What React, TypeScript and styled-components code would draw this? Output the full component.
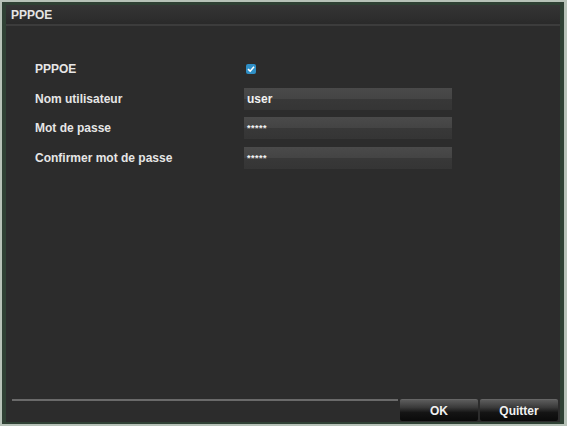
import React from 'react';
import styled, { createGlobalStyle } from 'styled-components';

const GlobalStyle = createGlobalStyle`
  html, body {
    margin: 0;
    padding: 0;
    background: #b7c2b8;
  }
  body {
    font-family: "Liberation Sans", Arial, sans-serif;
  }
`;

const Window = styled.div`
  box-sizing: border-box;
  width: 567px;
  height: 426px;
  padding: 2px 3px 2px 2px;
  background: #b7c2b8;
`;

const Frame = styled.div`
  box-sizing: border-box;
  height: 100%;
  border: 4px solid #2f4134;
  border-top-width: 3px;
  border-bottom-width: 2px;
  background: #2c2c2c;
  display: flex;
  flex-direction: column;
`;

const TitleBar = styled.div`
  height: 19px;
  padding-left: 5px;
  display: flex;
  align-items: center;
  color: #e4e4e4;
  font-size: 12px;
  font-weight: bold;
  background: linear-gradient(#353535, #2a2a2a);
  border-bottom: 2px solid #3c3c3c;
`;

const Body = styled.div`
  flex: 1;
  padding: 33px 0 0 29px;
`;

const Form = styled.div`
  display: grid;
  grid-template-columns: 209px 208px;
  grid-auto-rows: 20px;
  row-gap: 9.5px;
  align-items: center;
`;

const Label = styled.span`
  color: #e6e6e6;
  font-size: 12px;
  font-weight: bold;
`;

const Check = styled.span`
  width: 10px;
  height: 10px;
  margin-left: 2px;
  border-radius: 2px;
  background: #2f8fc6;
  display: flex;
  align-items: center;
  justify-content: center;
`;

const Field = styled.div<{ $secret?: boolean }>`
  box-sizing: border-box;
  height: 22px;
  padding-left: 3px;
  display: flex;
  align-items: center;
  color: #f2f2f2;
  font-size: ${(p) => (p.$secret ? '9px' : '12px')};
  font-weight: bold;
  letter-spacing: ${(p) => (p.$secret ? '0.5px' : '0')};
  background: linear-gradient(#4a4a4a 0%, #444 50%, #383838 52%, #353535 100%);
`;

const Footer = styled.div`
  height: 22px;
  display: flex;
  align-items: stretch;
  padding: 0 2px 1px 6px;
`;

const Rule = styled.div`
  flex: 1;
  align-self: flex-start;
  height: 2px;
  background: #6a6a6a;
`;

const Button = styled.button`
  width: 78px;
  margin-left: 2px;
  padding: 0;
  border: none;
  border-top: 1px solid #666;
  border-radius: 2px;
  color: #f0f0f0;
  font-family: "Liberation Sans", Arial, sans-serif;
  font-size: 12px;
  font-weight: bold;
  background: linear-gradient(#5c5c5c 0%, #3a3a3a 35%, #141414 60%, #0a0a0a 100%);
`;

const fields = [
  { label: 'Nom utilisateur', value: 'user', secret: false },
  { label: 'Mot de passe', value: '*****', secret: true },
  { label: 'Confirmer mot de passe', value: '*****', secret: true },
];

const App: React.FC = () => (
  <>
    <GlobalStyle />
    <Window>
      <Frame>
        <TitleBar>PPPOE</TitleBar>
        <Body>
          <Form>
            <Label>PPPOE</Label>
            <Check>
              <svg width="8" height="8" viewBox="0 0 8 8">
                <path d="M1 4.2 L3.2 6.2 L7 1.8" stroke="#fff" strokeWidth="1.6" fill="none" />
              </svg>
            </Check>
            {fields.map((f) => (
              <React.Fragment key={f.label}>
                <Label>{f.label}</Label>
                <Field $secret={f.secret}>{f.value}</Field>
              </React.Fragment>
            ))}
          </Form>
        </Body>
        <Footer>
          <Rule />
          <Button>OK</Button>
          <Button>Quitter</Button>
        </Footer>
      </Frame>
    </Window>
  </>
);

export default App;
